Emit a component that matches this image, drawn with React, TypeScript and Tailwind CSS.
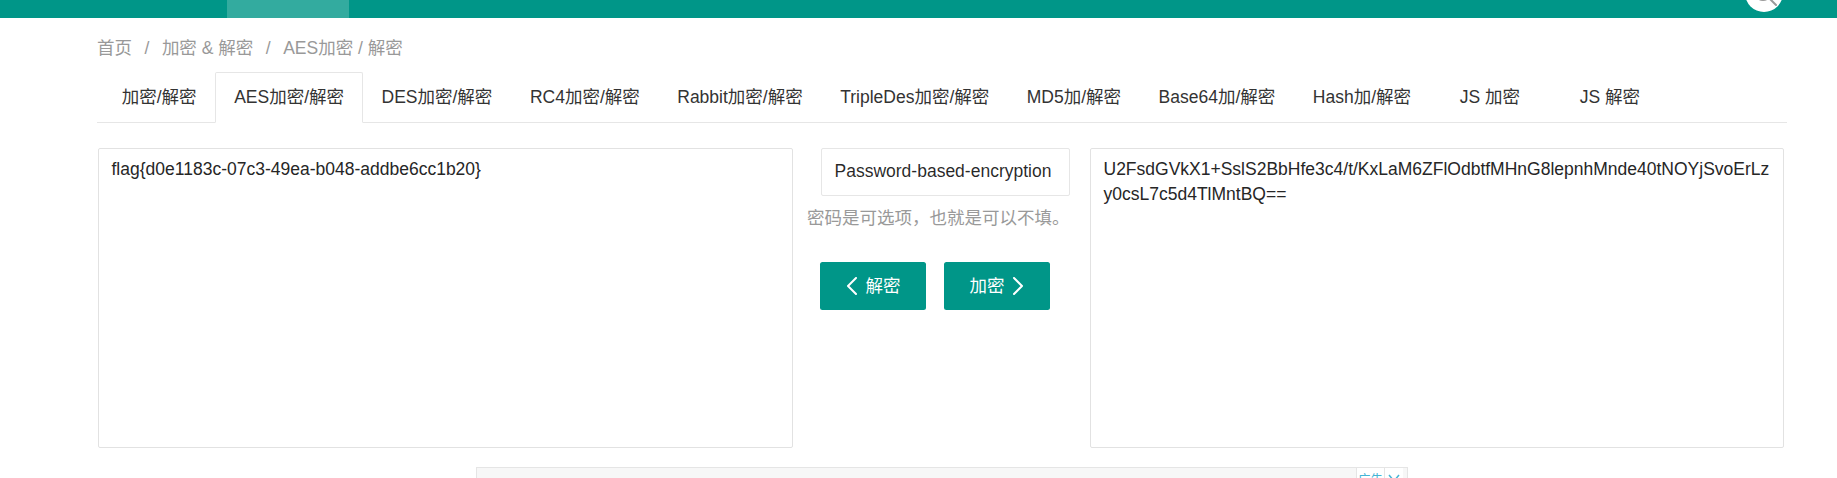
import { useState } from "react"

const tabs = [
  { label: "加密/解密" },
  { label: "AES加密/解密" },
  { label: "DES加密/解密" },
  { label: "RC4加密/解密" },
  { label: "Rabbit加密/解密" },
  { label: "TripleDes加密/解密" },
  { label: "MD5加/解密" },
  { label: "Base64加/解密" },
  { label: "Hash加/解密" },
  { label: "JS 加密", wide: true },
  { label: "JS 解密", wide: true },
]

const cipher =
  "U2FsdGVkX1+SslS2BbHfe3c4/t/KxLaM6ZFlOdbtfMHnG8lepnhMnde40tNOYjSvoErLz\ny0csL7c5d4TlMntBQ=="

function Chevron({ dir }: { dir: "left" | "right" }) {
  return (
    <svg viewBox="0 0 12 18" className="h-[18px] w-[12px]" fill="none">
      <polyline
        points={dir === "left" ? "10,1 2,9 10,17" : "2,1 10,9 2,17"}
        stroke="white"
        strokeWidth="2"
        strokeLinecap="round"
        strokeLinejoin="round"
      />
    </svg>
  )
}

export default function App() {
  const [active] = useState(1)
  const [plain, setPlain] = useState("flag{d0e1183c-07c3-49ea-b048-addbe6cc1b20}")
  const [pwd, setPwd] = useState("Password-based-encryption")
  const [out, setOut] = useState(cipher)

  return (
    <div className="relative h-[478px] w-[1837px] overflow-hidden bg-white font-['Liberation_Sans','Noto_Sans_CJK_SC',sans-serif] text-[#333]">
      {/* top nav (page scrolled, only the bottom strip shows) */}
      <div className="flex h-[18px] bg-[#009688]">
        <div className="w-[227px]" />
        <div className="h-full w-[122px] bg-white/20" />
      </div>
      <div className="absolute left-[1745px] top-[-26px] h-[38px] w-[38px] rounded-full bg-white">
        <svg viewBox="0 0 38 38" className="h-full w-full" fill="none">
          <circle cx="18" cy="18" r="8" stroke="#9a9a9a" strokeWidth="2" />
          <line x1="24" y1="24" x2="31" y2="31" stroke="#9a9a9a" strokeWidth="2" strokeLinecap="round" />
        </svg>
      </div>

      <main className="ml-[97px] w-[1690px]">
        {/* breadcrumb */}
        <div className="mt-[18px] flex h-[25px] items-center text-[17.5px] leading-[25px] text-[#999]">
          <a>首页</a>
          <span className="mx-[12.5px]">/</span>
          <a>加密 &amp; 解密</a>
          <span className="mx-[12.5px]">/</span>
          <cite className="not-italic">AES加密 / 解密</cite>
        </div>

        {/* tabs */}
        <ul className="mt-[11px] flex h-[51px] border-b border-[#e6e6e6] pl-[6px]">
          {tabs.map((t, i) => (
            <li
              key={t.label}
              className={`relative h-[50px] whitespace-nowrap px-[18.75px] text-center text-[17.5px] leading-[50px] text-[#333] ${
                t.wide ? "w-[120px]" : ""
              }`}
            >
              {i === active && (
                <span className="absolute inset-x-0 top-0 -bottom-px rounded-t-[2px] border border-[#e6e6e6] border-b-white bg-white" />
              )}
              <span className="relative">{t.label}</span>
            </li>
          ))}
        </ul>

        {/* content */}
        <div className="ml-px mt-[25px] flex items-start">
          <textarea
            value={plain}
            onChange={(e) => setPlain(e.target.value)}
            className="h-[300px] w-[695px] resize-none rounded-[2px] border border-[#e2e2e2] px-[12.5px] py-[7.5px] text-[17.5px] leading-[25px] text-[#262626] outline-none"
          />

          <div className="flex w-[297px] flex-col">
            <input
              value={pwd}
              onChange={(e) => setPwd(e.target.value)}
              className="ml-[28px] h-[47.5px] w-[249px] rounded-[2px] border border-[#e6e6e6] px-[12.5px] text-[17.5px] text-black/85 outline-none"
            />
            <p className="ml-[14px] mt-[10px] whitespace-nowrap text-[17.5px] leading-[25px] text-[#999]">
              密码是可选项，也就是可以不填。
            </p>
            <div className="ml-[27px] mt-[31.5px] flex gap-[17.5px]">
              <button className="flex h-[48px] w-[106px] items-center justify-center gap-[8px] rounded-[2.5px] bg-[#009688] text-[17.5px] text-white">
                <Chevron dir="left" />
                <span>解密</span>
              </button>
              <button className="flex h-[48px] w-[106px] items-center justify-center gap-[7px] rounded-[2.5px] bg-[#009688] text-[17.5px] text-white">
                <span>加密</span>
                <Chevron dir="right" />
              </button>
            </div>
          </div>

          <textarea
            value={out}
            onChange={(e) => setOut(e.target.value)}
            className="h-[300px] w-[694px] resize-none rounded-[2px] border border-[#e2e2e2] px-[12.5px] py-[7.5px] text-[17.5px] leading-[25px] text-[#262626] outline-none"
          />
        </div>

        {/* ad slot */}
        <div className="mx-auto mt-[18.5px] h-[80px] w-[932px] border border-[#e5e5e5] bg-[#f7f7f7]">
          <div className="flex justify-end pr-[4px]">
            <div className="flex h-[20px] items-start border-b border-l border-[#e5e5e5] bg-white">
              <span className="px-[1px] pt-[4px] text-[12.5px] leading-[16px] text-[#44b5d6]">广告</span>
              <span className="flex h-full items-start border-l border-[#e5e5e5] px-[3px] pt-[6px]">
                <svg viewBox="0 0 12 8" className="h-[8px] w-[12px]" fill="none">
                  <polyline points="1,1 6,7 11,1" stroke="#44b5d6" strokeWidth="1.5" />
                </svg>
              </span>
            </div>
          </div>
        </div>
      </main>
    </div>
  )
}
